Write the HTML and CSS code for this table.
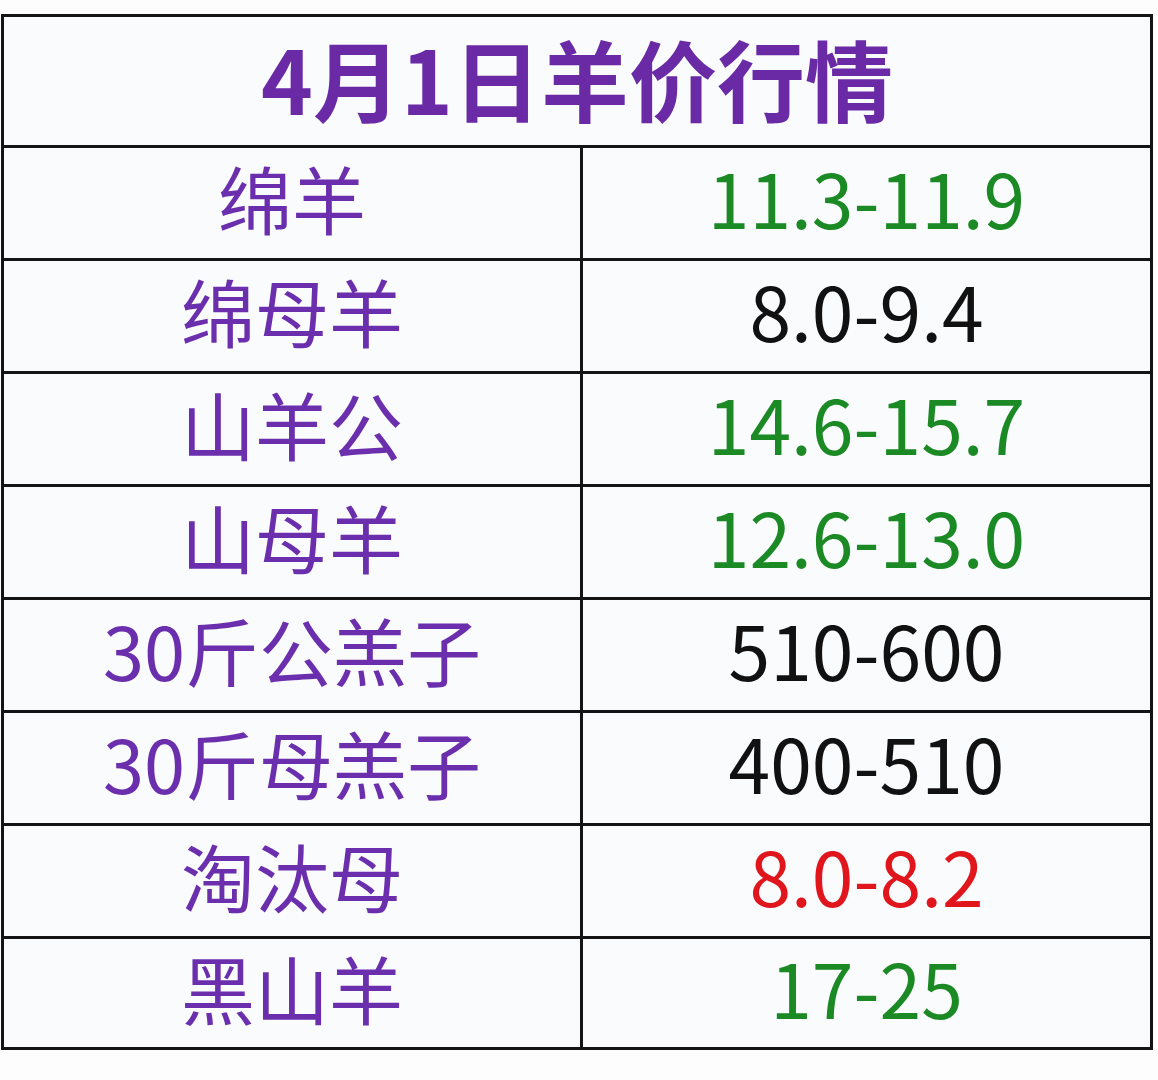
FILE: index.html
```html
<!DOCTYPE html>
<html lang="zh-CN">
<head>
<meta charset="utf-8">
<title>4月1日羊价行情</title>
<link rel="stylesheet" href="styles.css">
</head>
<body>
<table class="price-table">
  <colgroup><col class="col-name"><col class="col-price"></colgroup>
  <thead>
    <tr class="title-row"><th colspan="2" class="title">4月1日羊价行情</th></tr>
  </thead>
  <tbody>
    <tr><td class="name">绵羊</td><td class="price up">11.3-11.9</td></tr>
    <tr><td class="name">绵母羊</td><td class="price flat">8.0-9.4</td></tr>
    <tr><td class="name">山羊公</td><td class="price up">14.6-15.7</td></tr>
    <tr><td class="name">山母羊</td><td class="price up">12.6-13.0</td></tr>
    <tr><td class="name">30斤公羔子</td><td class="price flat">510-600</td></tr>
    <tr><td class="name">30斤母羔子</td><td class="price flat">400-510</td></tr>
    <tr><td class="name">淘汰母</td><td class="price down">8.0-8.2</td></tr>
    <tr><td class="name">黑山羊</td><td class="price up">17-25</td></tr>
  </tbody>
</table>
</body>
</html>
```

FILE: styles.css
```css
html, body {
  margin: 0;
  padding: 0;
  background: #fdfdfe;
}
body {
  padding: 14px 0 0 1px;
  font-family: "Noto Sans CJK SC", "Noto Sans", sans-serif;
}
.price-table {
  border-collapse: collapse;
  table-layout: fixed;
  width: 1152px;
  border: 3px solid #141414;
  background: #f9fbfd;
}
.col-name { width: 579px; }
.col-price { width: auto; }
.price-table th,
.price-table td {
  border: 3px solid #141414;
  padding: 0;
  text-align: center;
  vertical-align: middle;
  line-height: 1;
}
.title-row { height: 131px; }
.price-table tbody tr { height: 113px; }
.price-table tbody tr:last-child { height: 111px; }
.price-table .title {
  font-size: 88px;
  font-weight: 700;
  color: #6a2aa6;
  padding-bottom: 9px;
}
.price-table .name {
  font-size: 74px;
  font-weight: 400;
  color: #6b2fae;
  padding-bottom: 12px;
}
.price-table .price {
  font-size: 75px;
  font-weight: 400;
  padding-bottom: 14px;
}
.up { color: #1b8a24; }
.flat { color: #111111; }
.down { color: #e0161c; }
```
